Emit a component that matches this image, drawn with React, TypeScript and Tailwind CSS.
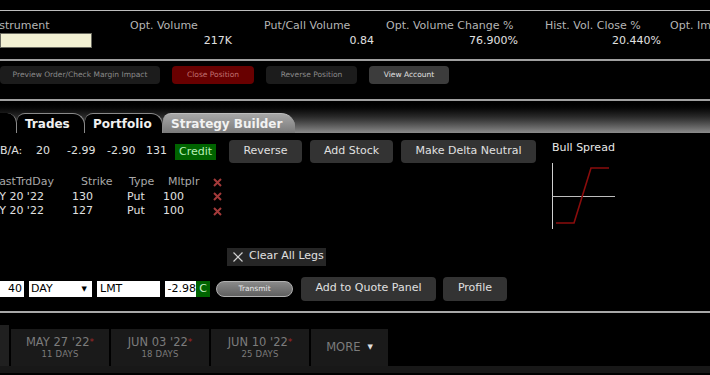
import React from 'react';

const HeaderCol = ({ label, value, w, ml }: { label: string; value: string; w: string; ml: string }) => (
  <div className={`flex flex-col shrink-0 ${w} ${ml}`}>
    <span className="text-[11px] leading-[14px] text-[#b5b5b5] whitespace-nowrap">{label}</span>
    <span className="text-[11px] leading-[15px] text-[#e0e0e0] text-right whitespace-nowrap">{value}</span>
  </div>
);

const RedX = () => (
  <svg width="9" height="9" viewBox="0 0 9 9" className="shrink-0">
    <path d="M1 1 L8 8 M8 1 L1 8" stroke="#a33a3a" strokeWidth="2" />
  </svg>
);

const Expiry = ({ date, days }: { date: string; days: string }) => (
  <div className="w-[98px] h-[37px] bg-[#1a1a1a] flex flex-col items-center justify-center">
    <span className="text-[11.5px] leading-[14px] text-[#7c7c7c]">
      {date}
      <span className="text-[#a02828] text-[9px] align-top">*</span>
    </span>
    <span className="text-[8.5px] leading-[11px] text-[#7c7c7c] tracking-wide">{days}</span>
  </div>
);

const App = () => {
  return (
    <div className="w-[710px] h-[375px] bg-black overflow-hidden font-['DejaVu_Sans',sans-serif]">
      <div className="h-[10px]" />

      {/* market data header */}
      <div className="h-[49px] border-t border-[#bdbdbd] flex pt-[8px] overflow-hidden">
        <div className="flex flex-col w-[130px] shrink-0">
          <span className="text-[11px] leading-[14px] text-[#b5b5b5] -ml-[11px] whitespace-nowrap">Instrument</span>
          <div className="w-[92px] h-[15px] bg-[#f2f0d2] border border-[#6a6a60]" />
        </div>
        <HeaderCol label="Opt. Volume" value="217K" w="w-[102px]" ml="ml-0" />
        <HeaderCol label="Put/Call Volume" value="0.84" w="w-[110px]" ml="ml-[32px]" />
        <HeaderCol label="Opt. Volume Change %" value="76.900%" w="w-[132px]" ml="ml-[12px]" />
        <HeaderCol label="Hist. Vol. Close %" value="20.440%" w="w-[116px]" ml="ml-[27px]" />
        <HeaderCol label="Opt. Implied Vol. %" value="" w="w-[130px]" ml="ml-[9px]" />
      </div>

      {/* order actions */}
      <div className="h-[40px] border-t-2 border-[#a0a0a0] flex items-start pt-[5px] gap-[12px]">
        <div className="w-[160px] h-[18px] rounded-[4px] bg-[#1c1c1c] flex items-center justify-center text-[7.5px] text-[#8a8a8a]">
          Preview Order/Check Margin Impact
        </div>
        <div className="w-[82px] h-[18px] rounded-[4px] bg-[#680000] flex items-center justify-center text-[7.5px] text-[#c07070]">
          Close Position
        </div>
        <div className="w-[91px] h-[18px] rounded-[4px] bg-[#1c1c1c] flex items-center justify-center text-[7.5px] text-[#8a8a8a]">
          Reverse Position
        </div>
        <div className="w-[80px] h-[18px] rounded-[4px] bg-[#3c3c3c] flex items-center justify-center text-[7.5px] text-[#e0e0e0]">
          View Account
        </div>
      </div>

      {/* tab strip */}
      <div className="h-[34px] border-t-2 border-[#a0a0a0] bg-linear-to-b from-black via-[#2a2a2a] to-[#8c8c8c] flex items-end">
        <div className="w-[17px] h-[20px] border-r border-[#8a8a8a] rounded-tr-[10px] bg-black" />
        <div className="w-[68px] h-[20px] bg-black border-t border-r border-[#8a8a8a] rounded-tl-[8px] rounded-tr-[12px] flex items-center pl-[8px] text-[12px] font-bold text-[#f0f0f0]">
          Trades
        </div>
        <div className="w-[78px] h-[20px] bg-black border-t border-r border-[#8a8a8a] rounded-tl-[8px] rounded-tr-[12px] flex items-center pl-[8px] text-[12px] font-bold text-[#f0f0f0]">
          Portfolio
        </div>
        <div className="w-[132px] h-[20px] bg-linear-to-b from-[#a8a8a8] to-[#7a7a7a] border-t border-[#bdbdbd] rounded-tl-[8px] rounded-tr-[14px] flex items-center pl-[8px] text-[12px] font-bold text-[#f2f2f2]">
          Strategy Builder
        </div>
      </div>

      {/* strategy builder panel */}
      <div className="h-[178px] flex">
        <div className="w-[552px] flex flex-col pt-[7px]">
          <div className="flex items-center h-[23px]">
            <div className="w-[229px] flex items-center text-[11px] text-[#e0e0e0]">
              <span className="w-[36px]">B/A:</span>
              <span className="w-[31px]">20</span>
              <span className="w-[40px]">-2.99</span>
              <span className="w-[39px]">-2.90</span>
              <span className="w-[29px]">131</span>
              <span className="px-[4px] h-[16px] leading-[16px] bg-[#006400] text-[#b8f0b8]">Credit</span>
            </div>
            <div className="flex gap-[8px]">
              <div className="w-[73px] h-[23px] rounded-[4px] bg-[#333] flex items-center justify-center text-[11px] text-[#e0e0e0]">Reverse</div>
              <div className="w-[83px] h-[23px] rounded-[4px] bg-[#333] flex items-center justify-center text-[11px] text-[#e0e0e0]">Add Stock</div>
              <div className="w-[135px] h-[23px] rounded-[4px] bg-[#333] flex items-center justify-center text-[11px] text-[#e0e0e0]">Make Delta Neutral</div>
            </div>
          </div>

          {/* legs */}
          <div className="mt-[12px] flex flex-col text-[11px] leading-[14.5px]">
            <div className="flex items-center text-[#a8a8a8]">
              <span className="w-[81px] -ml-[7px] whitespace-nowrap">LastTrdDay</span>
              <span className="w-[48px] ml-[7px]">Strike</span>
              <span className="w-[39px]">Type</span>
              <span className="w-[45px]">Mltplr</span>
              <RedX />
            </div>
            {['130', '127'].map((strike) => (
              <div key={strike} className="flex items-center text-[#e0e0e0]">
                <span className="w-[72px] -ml-[17px] whitespace-nowrap">MAY 20 &apos;22</span>
                <span className="w-[55px] ml-[17px]">{strike}</span>
                <span className="w-[36px]">Put</span>
                <span className="w-[50px]">100</span>
                <RedX />
              </div>
            ))}
          </div>

          <div className="mt-[29px] ml-[227px] w-[99px] h-[18px] bg-[#262626] flex items-center gap-[6px] pl-[6px] text-[11px] text-[#e0e0e0]">
            <svg width="10" height="10" viewBox="0 0 10 10">
              <path d="M0.5 0.5 L9.5 9.5 M9.5 0.5 L0.5 9.5" stroke="#d0d0d0" strokeWidth="1.2" />
            </svg>
            Clear All Legs
          </div>

          {/* order row */}
          <div className="mt-[11px] flex items-center h-[24px] text-[11px]">
            <div className="w-[24px] h-[16px] bg-white text-black text-right pr-[2px] leading-[16px]">40</div>
            <div className="ml-[5px] w-[63px] h-[16px] bg-white text-black pl-[2px] pr-[5px] leading-[16px] flex items-center justify-between">
              DAY
              <span className="text-[7px]">▼</span>
            </div>
            <div className="ml-[5px] w-[63px] h-[16px] bg-white text-black pl-[3px] leading-[16px]">LMT</div>
            <div className="ml-[5px] w-[31px] h-[16px] bg-white text-black text-right leading-[16px]">-2.98</div>
            <div className="w-[14px] h-[16px] bg-[#006400] text-[#c8f0c8] text-center leading-[16px]">C</div>
            <div className="ml-[6px] w-[77px] h-[16px] rounded-full bg-linear-to-b from-[#8a8a8a] to-[#606060] border border-[#b0b0b0] flex items-center justify-center text-[7.5px] text-[#e8e8e8]">
              Transmit
            </div>
            <div className="ml-[8px] w-[135px] h-[24px] rounded-[4px] bg-[#333] flex items-center justify-center text-[#e0e0e0]">Add to Quote Panel</div>
            <div className="ml-[7px] w-[64px] h-[24px] rounded-[4px] bg-[#333] flex items-center justify-center text-[#e0e0e0]">Profile</div>
          </div>
        </div>

        {/* strategy chart */}
        <div className="flex flex-col pt-[8px]">
          <span className="text-[11px] leading-[14px] text-[#e8e8e8]">Bull Spread</span>
          <svg width="66" height="68" viewBox="0 0 66 68" className="mt-[8px]">
            <line x1="0.5" y1="0" x2="0.5" y2="66" stroke="#cfcfcf" strokeWidth="1" />
            <line x1="0" y1="33.5" x2="63" y2="33.5" stroke="#bdbdbd" strokeWidth="1" />
            <polyline points="4,60 22,60 39,5 57,5" fill="none" stroke="#8a0c0c" strokeWidth="1.6" />
          </svg>
        </div>
      </div>

      {/* expiry strip */}
      <div className="border-t-2 border-[#a8a8a8] h-[62px] flex flex-col">
        <div className="flex items-end h-[53px]">
          <div className="w-[9px] h-[41px] bg-[#202020]" />
          <div className="flex gap-[2px] ml-[2px]">
            <Expiry date="MAY 27 '22" days="11 DAYS" />
            <Expiry date="JUN 03 '22" days="18 DAYS" />
            <Expiry date="JUN 10 '22" days="25 DAYS" />
            <div className="w-[77px] h-[37px] bg-[#1a1a1a] flex items-center justify-center gap-[7px] text-[11.5px] text-[#7c7c7c]">
              MORE
              <span className="text-[7px] text-[#e0e0e0]">▼</span>
            </div>
          </div>
        </div>
        <div className="flex-1 bg-[#181818]" />
      </div>
    </div>
  );
};

export default App;
